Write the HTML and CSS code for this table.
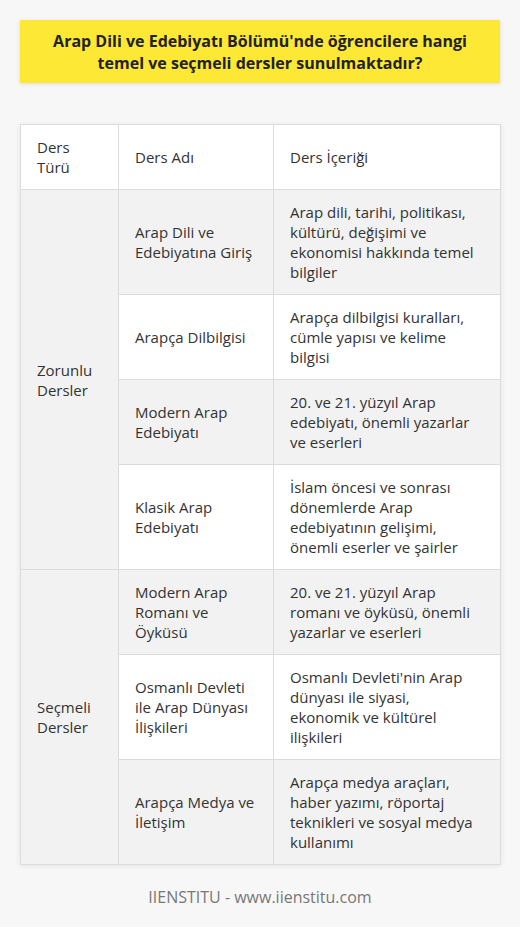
FILE: index.html
```html
<!DOCTYPE html>
<html lang="tr">
<head>
<meta charset="utf-8">
<link rel="stylesheet" href="styles.css">
</head>
<body>
<div class="page">
  <h1 class="title">Arap Dili ve Edebiyatı Bölümü'nde öğrencilere hangi temel ve seçmeli dersler sunulmaktadır?</h1>
  <table class="courses">
    <colgroup><col class="c1"><col class="c2"><col class="c3"></colgroup>
    <thead>
      <tr><th>Ders Türü</th><th>Ders Adı</th><th>Ders İçeriği</th></tr>
    </thead>
    <tbody>
      <tr class="alt"><td rowspan="4">Zorunlu Dersler</td><td>Arap Dili ve Edebiyatına Giriş</td><td>Arap dili, tarihi, politikası, kültürü, değişimi ve ekonomisi hakkında temel bilgiler</td></tr>
      <tr><td>Arapça Dilbilgisi</td><td>Arapça dilbilgisi kuralları, cümle yapısı ve kelime bilgisi</td></tr>
      <tr class="alt"><td>Modern Arap Edebiyatı</td><td>20. ve 21. yüzyıl Arap edebiyatı, önemli yazarlar ve eserleri</td></tr>
      <tr><td>Klasik Arap Edebiyatı</td><td>İslam öncesi ve sonrası dönemlerde Arap edebiyatının gelişimi, önemli eserler ve şairler</td></tr>
      <tr class="alt"><td rowspan="3">Seçmeli Dersler</td><td>Modern Arap Romanı ve Öyküsü</td><td>20. ve 21. yüzyıl Arap romanı ve öyküsü, önemli yazarlar ve eserleri</td></tr>
      <tr><td>Osmanlı Devleti ile Arap Dünyası İlişkileri</td><td>Osmanlı Devleti'nin Arap dünyası ile siyasi,<br>ekonomik ve kültürel ilişkileri</td></tr>
      <tr class="alt"><td>Arapça Medya ve İletişim</td><td>Arapça medya araçları, haber yazımı, röportaj teknikleri ve sosyal medya kullanımı</td></tr>
    </tbody>
  </table>
  <p class="footer">IIENSTITU - www.iienstitu.com</p>
</div>
</body>
</html>
```

FILE: styles.css
```css
html, body {
  margin: 0;
  padding: 0;
  background: #f7f7f7;
}
body {
  font-family: "Open Sans", "DejaVu Sans", sans-serif;
  color: #333;
}
.page {
  padding: 20px 20px 0;
}
.title {
  margin: 0;
  background: #fde835;
  box-shadow: 0 1px 4px rgba(0,0,0,0.12);
  font-size: 16px;
  font-weight: 700;
  line-height: 22px;
  text-align: center;
  color: #222;
  padding: 9.5px 20px;
}
.courses {
  margin-top: 41px;
  width: 480px;
  table-layout: fixed;
  border-collapse: collapse;
  background: #fff;
  box-shadow: 0 1px 6px rgba(0,0,0,0.08);
  font-size: 15px;
  line-height: 20px;
}
.courses .c1 { width: 98px; }
.courses .c2 { width: 155px; }
.courses .c3 { width: 227px; }
.courses th, .courses td {
  border: 1px solid #dcdcdc;
  padding: 12px 16px;
  text-align: left;
  vertical-align: middle;
  font-weight: 400;
  color: #333;
}
.courses tr.alt td { background: #f2f2f2; }
.footer {
  margin: 22px 0 0;
  text-align: center;
  font-size: 16px;
  line-height: 20px;
  color: #777;
}
```
